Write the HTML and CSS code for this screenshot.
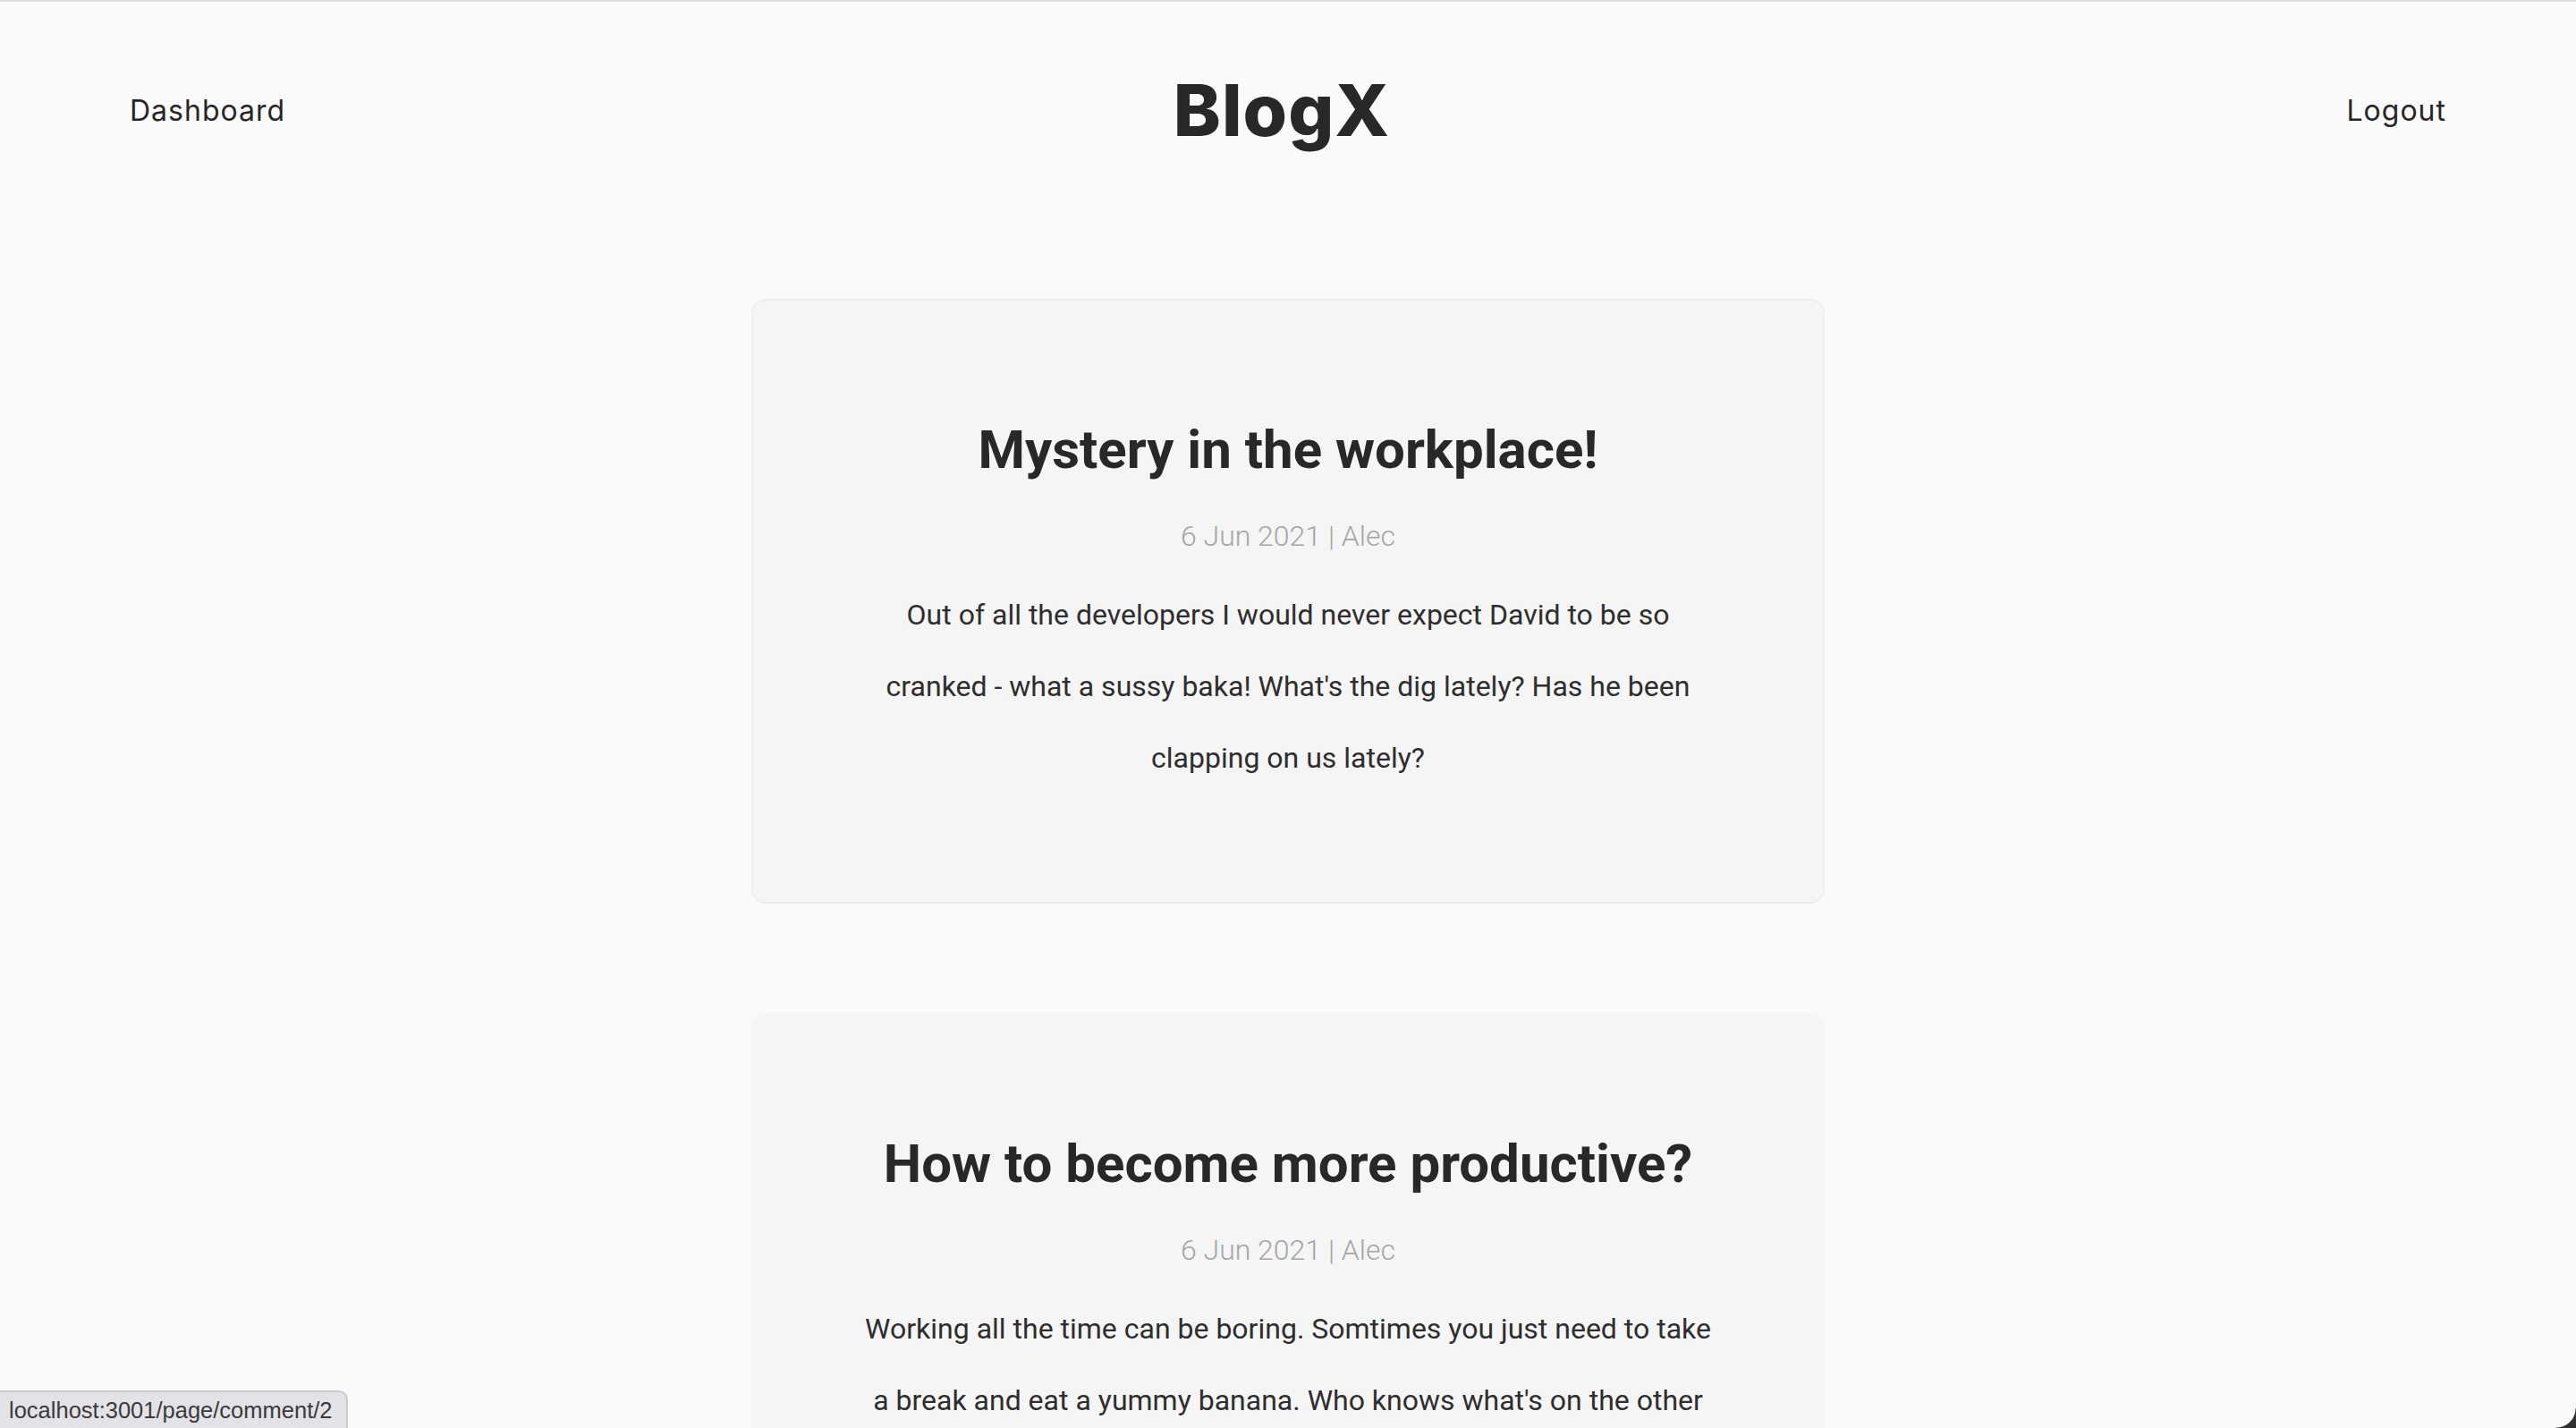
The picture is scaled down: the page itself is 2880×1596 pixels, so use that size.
FILE: index.html
```html
<!DOCTYPE html>
<html lang="en">
<head>
<meta charset="utf-8">
<title>BlogX</title>
<link rel="stylesheet" href="styles.css">
</head>
<body>
<header class="topbar">
  <a class="nav-link nav-left" href="#">Dashboard</a>
  <h1 class="brand">BlogX</h1>
  <a class="nav-link nav-right" href="#">Logout</a>
</header>
<main class="feed">
  <article class="post post-active">
    <h2 class="post-title">Mystery in the workplace!</h2>
    <div class="post-meta">6 Jun 2021 | Alec</div>
    <p class="post-body">Out of all the developers I would never expect David to be so cranked - what a sussy baka! What's the dig lately? Has he been clapping on us lately?</p>
  </article>
  <article class="post">
    <h2 class="post-title">How to become more productive?</h2>
    <div class="post-meta">6 Jun 2021 | Alec</div>
    <p class="post-body">Working all the time can be boring. Somtimes you just need to take a break and eat a yummy banana. Who knows what's on the other side of the fence?</p>
  </article>
</main>
<div class="status-bar">localhost:3001/page/comment/2</div>
<div class="window-corner"></div>
</body>
</html>
```
FILE: styles.css
```css
html, body {
  margin: 0;
  padding: 0;
}
body {
  background: #fafafa;
  border-top: 2px solid #dcdce1;
  color: #2a2a2a;
  font-family: Roboto, "Liberation Sans", sans-serif;
  min-height: 100vh;
}
.topbar {
  display: grid;
  grid-template-columns: 1fr auto 1fr;
  align-items: center;
  height: 242px;
  padding: 0 145px;
  box-sizing: border-box;
}
.nav-link {
  font-family: Inter, "DejaVu Sans", sans-serif;
  font-size: 32px;
  font-weight: 400;
  letter-spacing: 1px;
  color: #262626;
  text-decoration: none;
}
.nav-left { justify-self: start; }
.nav-right { justify-self: end; }
.brand {
  margin: 0 14px 0 0;
  font-family: Inter, "DejaVu Sans", sans-serif;
  font-size: 80px;
  font-weight: 800;
  letter-spacing: 1px;
  color: #282828;
  line-height: 1;
}
.feed {
  display: flex;
  flex-direction: column;
  align-items: center;
  gap: 122px;
  padding-top: 90px;
}
.post {
  width: 1200px;
  box-sizing: border-box;
  background: #f5f5f5;
  border: 2px solid transparent;
  border-radius: 16px;
  padding: 131px 118px 121px;
  text-align: center;
}
.post-active {
  border-color: #eeeeee;
}
.post-title {
  margin: 0;
  font-size: 60px;
  font-weight: 700;
  line-height: normal;
  color: #282828;
}
.post-meta {
  margin-top: 42px;
  font-size: 32px;
  font-weight: 300;
  color: #a6a6a6;
}
.post-body {
  margin: 29px 0 0;
  font-size: 32px;
  font-weight: 400;
  line-height: 80px;
  color: #2e2e2e;
}
.status-bar {
  position: fixed;
  left: 0;
  bottom: 0;
  height: 40px;
  padding: 0 16px 0 10px;
  display: flex;
  align-items: center;
  background: #e3e3e7;
  border-top: 2px solid #cbcbd0;
  border-right: 2px solid #cbcbd0;
  border-top-right-radius: 10px;
  font-family: "Liberation Sans", Arial, sans-serif;
  font-size: 25.5px;
  color: #3a3a3a;
}
.window-corner {
  position: fixed;
  right: 0;
  bottom: 0;
  width: 22px;
  height: 22px;
  background: radial-gradient(circle at 0 0, transparent 21px, #2f2f2f 22px);
}
```
